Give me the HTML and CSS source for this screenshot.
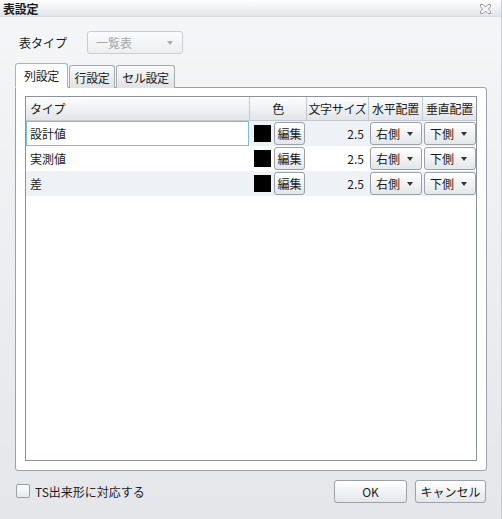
FILE: index.html
```html
<!DOCTYPE html>
<html lang="ja">
<head>
<meta charset="utf-8">
<link rel="stylesheet" href="styles.css">
</head>
<body>
<div class="dialog">
  <div class="titlebar">
    <span class="title">表設定</span>
    <svg class="close" width="11" height="10" viewBox="0 0 11 10">
      <path d="M0.5 0.5 H3 L5.5 3 L8 0.5 H10.5 V2.5 L8.5 5 L10.5 7.5 V9.5 H8 L5.5 7 L3 9.5 H0.5 V7.5 L2.5 5 L0.5 2.5 Z" fill="#f4f4f4" stroke="#9a9a9a" stroke-width="1"/>
    </svg>
  </div>
  <div class="content">
    <div class="type-row">
      <span class="label">表タイプ</span>
      <div class="combo"><span>一覧表</span><i class="arrow light"></i></div>
    </div>
    <div class="tabs">
      <div class="tab active">列設定</div>
      <div class="tab">行設定</div>
      <div class="tab">セル設定</div>
    </div>
    <div class="panel">
      <div class="table">
        <div class="thead">
          <div class="th left">タイプ</div>
          <div class="th">色</div>
          <div class="th">文字サイズ</div>
          <div class="th">水平配置</div>
          <div class="th last">垂直配置</div>
        </div>
        <div class="tr alt">
          <div class="td name selected">設計値</div>
          <div class="td color"><span class="swatch"></span><span class="btn edit">編集</span></div>
          <div class="td num">2.5</div>
          <div class="td sel"><span class="btn drop">右側<i class="arrow"></i></span></div>
          <div class="td sel last"><span class="btn drop">下側<i class="arrow"></i></span></div>
        </div>
        <div class="tr">
          <div class="td name">実測値</div>
          <div class="td color"><span class="swatch"></span><span class="btn edit">編集</span></div>
          <div class="td num">2.5</div>
          <div class="td sel"><span class="btn drop">右側<i class="arrow"></i></span></div>
          <div class="td sel last"><span class="btn drop">下側<i class="arrow"></i></span></div>
        </div>
        <div class="tr alt">
          <div class="td name">差</div>
          <div class="td color"><span class="swatch"></span><span class="btn edit">編集</span></div>
          <div class="td num">2.5</div>
          <div class="td sel"><span class="btn drop">右側<i class="arrow"></i></span></div>
          <div class="td sel last"><span class="btn drop">下側<i class="arrow"></i></span></div>
        </div>
      </div>
    </div>
    <div class="footer">
      <label class="check"><span class="box"></span>TS出来形に対応する</label>
      <div class="buttons">
        <span class="btn action ok">OK</span>
        <span class="btn action cancel">キャンセル</span>
      </div>
    </div>
  </div>
</div>
</body>
</html>
```
FILE: styles.css
```css
* { box-sizing: border-box; }
html, body { margin: 0; padding: 0; }
body {
  font-family: "Noto Sans CJK JP", "Noto Sans", sans-serif;
  font-size: 12px;
  color: #1b1b1b;
  background: #ffffff;
}
.dialog {
  width: 502px;
  height: 519px;
  display: flex;
  flex-direction: column;
  background: linear-gradient(#f5f6f8, #e4e6ea);
  border-right: 1px solid #c8ccd1;
}
.titlebar {
  height: 17px;
  flex: none;
  display: flex;
  align-items: center;
  justify-content: space-between;
  padding: 0 10px 0 3px;
  background: linear-gradient(#ffffff, #e1e4e8);
  border-bottom: 1px solid #d9dde2;
}
.title { font-weight: bold; font-size: 12px; line-height: 17px; letter-spacing: -0.3px; }
.close { display: block; margin-top: 1px; }
.content {
  flex: 1;
  display: flex;
  flex-direction: column;
  padding: 14px 14px 0 15px;
}
.type-row {
  display: flex;
  align-items: center;
  height: 23px;
}
.label { width: 72px; padding-left: 4px; }
.combo {
  width: 96px;
  height: 23px;
  border: 1px solid #c9cdd2;
  border-radius: 3px;
  background: linear-gradient(#fafbfc, #eceef1);
  display: flex;
  align-items: center;
  justify-content: space-between;
  padding: 0 9px 0 8px;
  color: #a3a6aa;
}
.arrow {
  display: inline-block;
  width: 0;
  height: 0;
  border-left: 3.5px solid transparent;
  border-right: 3.5px solid transparent;
  border-top: 4px solid #333;
}
.arrow.light { border-top-color: #a8abb0; }
.tabs {
  display: flex;
  align-items: flex-end;
  margin-top: 9px;
  height: 25px;
  position: relative;
  z-index: 1;
  margin-bottom: -1px;
}
.tab {
  height: 23px;
  padding: 1px 0 0 0;
  display: flex;
  align-items: center;
  justify-content: center;
  white-space: nowrap;
  border: 1px solid #a4abb2;
  border-bottom: none;
  border-radius: 3px 3px 0 0;
  background: linear-gradient(#f8f9fa, #dfe2e6);
  margin-right: 1px;
  letter-spacing: -0.4px;
}
.tab.active {
  height: 25px;
  width: 53px;
  padding: 0 0 1px 0;
  background: #ffffff;
  border-color: #86c3d2;
  border-bottom: 1px solid #ffffff;
}
.tab:nth-child(2) { width: 46px; }
.tab:nth-child(3) { width: 59px; }
.panel {
  width: 472px;
  height: 384px;
  border: 1px solid #9aa1a8;
  border-radius: 0 3px 3px 3px;
  background: #ffffff;
  padding: 8px 9px 9px 9px;
}
.table {
  width: 452px;
  height: 365px;
  border: 1px solid #8c939a;
  background: #ffffff;
}
.thead {
  display: flex;
  height: 24px;
  background: linear-gradient(#fdfdfd, #e2e5e9);
  border-bottom: 1px solid #c3c8cd;
}
.th, .td {
  display: flex;
  align-items: center;
  justify-content: center;
  flex: none;
}
.th { border-right: 1px solid #c3c8cd; white-space: nowrap; letter-spacing: -0.3px; }
.th.last, .td.last { border-right: none; }
.th.left { justify-content: flex-start; padding-left: 4px; }
.th:nth-child(1), .td:nth-child(1) { width: 224px; }
.th:nth-child(2), .td:nth-child(2) { width: 57px; }
.th:nth-child(3), .td:nth-child(3) { width: 62px; }
.th:nth-child(4), .td:nth-child(4) { width: 54px; }
.th:nth-child(5), .td:nth-child(5) { width: 53px; }
.tr {
  display: flex;
  height: 25px;
  background: #ffffff;
}
.tr.alt { background: #eef1f5; }
.td.name { justify-content: flex-start; padding-left: 4px; }
.td.name.selected {
  border: 1px solid #74c2d6;
  background: #ffffff;
  width: 223px;
  margin-right: 1px;
  padding-left: 3px;
}
.td.color { justify-content: flex-start; padding-left: 4px; gap: 3px; }
.swatch { width: 17px; height: 17px; background: #000; display: block; }
.btn {
  display: flex;
  align-items: center;
  justify-content: center;
  height: 23px;
  border: 1px solid #9ba1a7;
  border-radius: 3px;
  background: linear-gradient(#ffffff, #e3e6ea);
  white-space: nowrap;
}
.btn.edit { width: 31px; }
.td.num { justify-content: flex-end; padding-right: 5px; }
.td.sel { justify-content: flex-start; padding-left: 1px; }
.btn.drop {
  width: 52px;
  justify-content: space-between;
  padding: 0 8px 0 5px;
}
.td.sel.last .btn.drop { width: 53px; }
.footer {
  display: flex;
  align-items: center;
  justify-content: space-between;
  height: 22px;
  margin-top: 9px;
  padding-right: 1px;
}
.check { display: flex; align-items: center; gap: 5px; padding-left: 1px; }
.box {
  width: 14px;
  height: 14px;
  border: 1px solid #9aa1a8;
  border-radius: 2px;
  background: linear-gradient(#ffffff, #e6e8eb);
}
.buttons { display: flex; gap: 8px; }
.btn.action { height: 23px; }
.btn.ok { width: 73px; }
.btn.cancel { width: 71px; }
```
